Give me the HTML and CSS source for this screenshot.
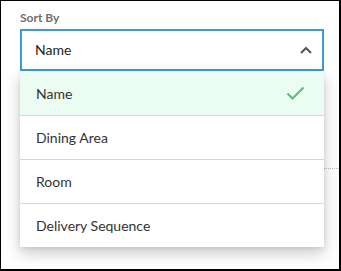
FILE: index.html
```html
<!DOCTYPE html>
<html>
<head>
<meta charset="utf-8">
<link rel="stylesheet" href="styles.css">
</head>
<body>
<div class="frame">
  <div class="label">Sort By</div>
  <div class="select-wrap">
    <div class="select">
      <span class="value">Name</span>
      <svg class="chev" width="12" height="8" viewBox="0 0 12 8"><path d="M1 7 L6 2 L11 7" fill="none" stroke="#555" stroke-width="2"/></svg>
    </div>
    <ul class="menu">
      <li class="item selected"><span>Name</span>
        <svg class="check" width="19" height="15" viewBox="0 0 19 15"><path d="M1.5 7.5 L6.5 12.5 L17.5 1.5" fill="none" stroke="#5cbd78" stroke-width="2"/></svg>
      </li>
      <li class="item"><span>Dining Area</span></li>
      <li class="item"><span>Room</span></li>
      <li class="item"><span>Delivery Sequence</span></li>
    </ul>
  </div>
  <div class="sep"></div>
</div>
</body>
</html>
```

FILE: styles.css
```css
* { box-sizing: border-box; }
html, body { margin: 0; padding: 0; background: #fff; }
body { font-family: Lato, "Liberation Sans", sans-serif; }
.frame {
  width: 341px;
  height: 271px;
  border-style: solid;
  border-color: #000;
  border-width: 1px 2px 2px 1px;
  padding: 9px 15px 0 19px;
  overflow: hidden;
}
.label {
  font-size: 12px;
  line-height: 16px;
  font-weight: 700;
  color: #6e6e6e;
  margin-bottom: 3px;
}
.select-wrap { position: relative; }
.select {
  height: 42px;
  border: 2px solid #3f9bce;
  display: flex;
  align-items: center;
  justify-content: space-between;
  padding: 0 10px 0 13px;
  font-size: 14px;
  color: #222;
  background: #fff;
}
.value { line-height: 36px; }
.chev { display: block; }
.menu {
  position: absolute;
  left: 0;
  right: 0;
  top: calc(100% + 1px);
  margin: 0;
  padding: 0;
  list-style: none;
  background: #fff;
  box-shadow: 0 6px 14px rgba(0,0,0,0.22), 0 1px 4px rgba(0,0,0,0.08);
  z-index: 2;
}
.item {
  height: 44px;
  border-bottom: 1px solid #d6d6d6;
  display: flex;
  align-items: center;
  justify-content: space-between;
  padding: 0 19px 0 16px;
  font-size: 14px;
  color: #333;
}
.item:last-child { border-bottom: none; height: 43px; }
.item.selected { background: #ebfcf2; }
.check { display: block; }
.sep {
  margin-top: 97px;
  margin-right: -15px;
  border-top: 1px dotted #bbb;
}
```
